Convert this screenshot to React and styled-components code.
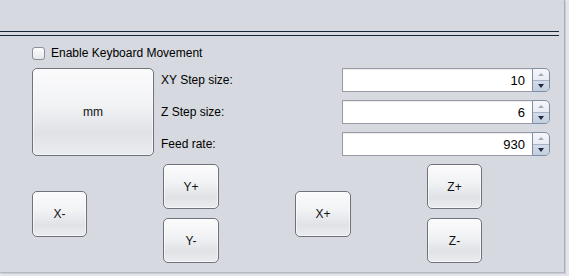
import React from "react";
import styled, { createGlobalStyle } from "styled-components";

const Global = createGlobalStyle`
  html, body { margin: 0; padding: 0; background: #e3e5ea; }
  body { width: 569px; height: 276px; overflow: hidden; font-family: "Liberation Sans", Arial, sans-serif; }
`;

const Panel = styled.div`
  width: 564px;
  height: 272px;
  background: #d6d9df;
  border-right: 1px solid #a9adb5;
  border-bottom: 1px solid #b4b8bf;
  box-shadow: 1px 1px 0 #c9ccd2;
  display: flex;
  flex-direction: column;
  font-size: 12px;
  color: #000;
`;

const Separator = styled.div`
  margin-top: 31px;
  width: 559px;
  height: 3px;
  border-top: 1px solid #1a2438;
  border-bottom: 1px solid #1a2438;
`;

const Content = styled.div`
  padding: 9px 0 0 32px;
  display: flex;
  flex-direction: column;
`;

const CheckRow = styled.label`
  display: flex;
  align-items: center;
  gap: 6px;
  height: 14px;
  margin-top: 1px;
`;

const Box = styled.span`
  width: 11px;
  height: 11px;
  border: 1px solid #8a8f98;
  border-radius: 3px;
  background: linear-gradient(#fcfcfd, #e6e8ec);
`;

const Settings = styled.div`
  display: flex;
  margin-top: 8px;
  height: 88px;
`;

const Button = styled.button`
  box-sizing: border-box;
  width: ${(p) => p.$w}px;
  height: ${(p) => p.$h}px;
  border: 1px solid #6e737b;
  border-radius: 5px;
  background: linear-gradient(
    #fbfbfc 0%,
    #f2f3f5 40%,
    #e0e2e6 75%,
    #eaecef 100%
  );
  box-shadow: inset 0 0 0 1px rgba(255,255,255,0.6);
  font-family: "Liberation Sans", Arial, sans-serif;
  font-size: 12px;
  color: #111;
  padding: 0;
`;

const Labels = styled.div`
  display: flex;
  flex-direction: column;
  gap: 8px;
  margin-left: 7px;
  width: 181px;
`;

const Label = styled.div`
  height: 24px;
  line-height: 25px;
`;

const Fields = styled.div`
  display: flex;
  flex-direction: column;
  gap: 8px;
`;

const Spinner = styled.div`
  display: flex;
  height: 24px;
`;

const Field = styled.div`
  box-sizing: border-box;
  width: 190px;
  height: 24px;
  border: 1px solid #979ba3;
  border-right: none;
  background: #fff;
  box-shadow: inset 0 1px 1px rgba(0,0,0,0.08);
  text-align: right;
  padding-right: 7px;
  line-height: 23px;
  font-size: 13px;
`;

const Arrows = styled.div`
  box-sizing: border-box;
  width: 18px;
  height: 24px;
  border: 1px solid #7d8ea6;
  border-radius: 0 5px 5px 0;
  background: linear-gradient(#f4f6f9, #dde3ec);
  display: grid;
  grid-template-rows: 1fr 1fr;
`;

const Half = styled.div`
  display: flex;
  align-items: center;
  justify-content: center;
  border-top: ${(p) => (p.$bottom ? "1px solid #a7b4c6" : "none")};
  background: ${(p) => (p.$bottom ? "linear-gradient(#d4dce8, #c3cedd)" : "transparent")};
  border-radius: ${(p) => (p.$bottom ? "0 0 4px 0" : "0 4px 0 0")};
`;

const Tri = styled.span`
  width: 0;
  height: 0;
  border-left: 3px solid transparent;
  border-right: 3px solid transparent;
  ${(p) =>
    p.$up
      ? "border-bottom: 3px solid #a3abb8;"
      : "border-top: 4px solid #1b2942;"}
`;

const Jog = styled.div`
  display: grid;
  grid-template-columns: 55px 56px 56px 55px;
  grid-template-rows: 45px 45px;
  column-gap: 76px;
  row-gap: 9px;
  margin-top: 8px;
`;

const Cell = styled.div`
  grid-column: ${(p) => p.$col};
  grid-row: ${(p) => p.$row};
  display: flex;
  align-items: center;
`;

function SpinBox({ value }) {
  return (
    <Spinner>
      <Field>{value}</Field>
      <Arrows>
        <Half><Tri $up /></Half>
        <Half $bottom><Tri /></Half>
      </Arrows>
    </Spinner>
  );
}

export default function App() {
  return (
    <>
      <Global />
      <Panel>
        <Separator />
        <Content>
          <CheckRow>
            <Box />
            <span>Enable Keyboard Movement</span>
          </CheckRow>
          <Settings>
            <Button $w={122} $h={88}>mm</Button>
            <Labels>
              <Label>XY Step size:</Label>
              <Label>Z Step size:</Label>
              <Label>Feed rate:</Label>
            </Labels>
            <Fields>
              <SpinBox value="10" />
              <SpinBox value="6" />
              <SpinBox value="930" />
            </Fields>
          </Settings>
          <Jog>
            <Cell $col="1" $row="1 / span 2">
              <Button $w={55} $h={46}>X-</Button>
            </Cell>
            <Cell $col="2" $row="1"><Button $w={56} $h={45}>Y+</Button></Cell>
            <Cell $col="2" $row="2"><Button $w={56} $h={45}>Y-</Button></Cell>
            <Cell $col="3" $row="1 / span 2">
              <Button $w={56} $h={46}>X+</Button>
            </Cell>
            <Cell $col="4" $row="1"><Button $w={55} $h={45}>Z+</Button></Cell>
            <Cell $col="4" $row="2"><Button $w={55} $h={45}>Z-</Button></Cell>
          </Jog>
        </Content>
      </Panel>
    </>
  );
}
